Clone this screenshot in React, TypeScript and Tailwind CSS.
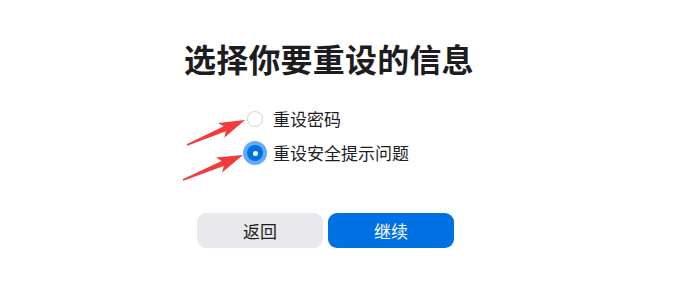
import React from 'react';

const font = { fontFamily: '"Noto Sans CJK SC", "Noto Sans", sans-serif' };

// builds a tapered annotation arrow from tail to tip
function arrowPoints(x1: number, y1: number, x2: number, y2: number) {
  const dx = x2 - x1;
  const dy = y2 - y1;
  const len = Math.hypot(dx, dy);
  const ux = dx / len;
  const uy = dy / len;
  const nx = -uy;
  const ny = ux;
  const head = 22;
  const bx = x2 - ux * head;
  const by = y2 - uy * head;
  const pts: [number, number][] = [
    [x1 + nx * 0.8, y1 + ny * 0.8],
    [bx + nx * 2.8, by + ny * 2.8],
    [bx - ux * 4 + nx * 8, by - uy * 4 + ny * 8],
    [x2, y2],
    [bx - ux * 4 - nx * 8, by - uy * 4 - ny * 8],
    [bx - nx * 2.8, by - ny * 2.8],
    [x1 - nx * 0.8, y1 - ny * 0.8],
  ];
  return pts.map((p) => p.join(',')).join(' ');
}

export default function App() {
  return (
    <div className="relative w-[700px] h-[308px] bg-white text-[#1d1d1f]" style={font}>
      <div className="pl-[184px] pt-[38px]">
        <h1 className="text-[32px] leading-[40px] font-bold tracking-[0.2px]">选择你要重设的信息</h1>

        <div className="mt-[29px] pl-[63px] flex flex-col gap-[10px]">
          <label className="flex items-center h-[24px] gap-[10px] text-[17px]">
            <span className="w-[16px] h-[16px] rounded-full border border-[#d2d2d7] bg-white" />
            <span>重设密码</span>
          </label>
          <label className="flex items-center h-[24px] gap-[10px] text-[17px]">
            <span className="w-[16px] h-[16px] rounded-full bg-[#0071e3] flex items-center justify-center shadow-[0_0_0_4px_#66aaf7]">
              <span className="w-[5px] h-[5px] rounded-full bg-white" />
            </span>
            <span>重设安全提示问题</span>
          </label>
        </div>

        <div className="mt-[48px] ml-[13px] flex gap-[5px]">
          <button className="w-[126px] h-[35px] rounded-[9px] bg-[#e8e8ed] text-[17px] text-[#1d1d1f]">返回</button>
          <button className="w-[126px] h-[35px] rounded-[9px] bg-[#0071e3] text-[17px] text-white">继续</button>
        </div>
      </div>

      <svg className="absolute inset-0 pointer-events-none" width="700" height="308" viewBox="0 0 700 308">
        <polygon points={arrowPoints(187, 145, 245, 120)} fill="#f23b3b" />
        <polygon points={arrowPoints(183, 180, 243, 155)} fill="#f23b3b" />
      </svg>
    </div>
  );
}
